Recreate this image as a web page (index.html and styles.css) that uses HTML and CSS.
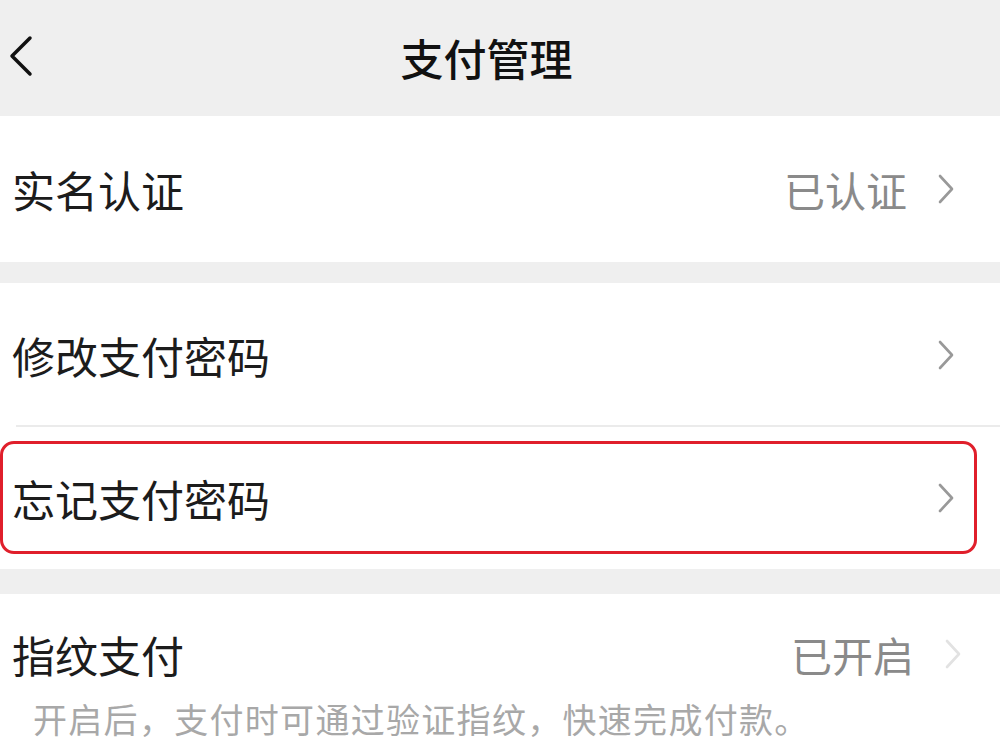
FILE: index.html
```html
<!DOCTYPE html>
<html lang="zh-CN">
<head>
  <meta charset="UTF-8" />
  <title>支付管理</title>
  <link rel="stylesheet" href="styles.css">
</head>
<body>

  <!-- 顶部导航 -->
  <div class="nav">
    <svg class="back" width="26" height="42" viewBox="0 0 26 42">
      <path d="M22 3 L4 21 L22 39" fill="none" stroke="#111" stroke-width="3.5" stroke-linecap="round" stroke-linejoin="round"/>
    </svg>
    <div class="nav-title">支付管理</div>
  </div>

  <div class="group">
    <div class="row">
      <span class="label">实名认证</span>
      <span class="value">已认证</span>
      <svg class="arrow" width="18" height="32" viewBox="0 0 18 32">
        <path d="M3 3 L15 16 L3 29" fill="none" stroke="#999" stroke-width="2.6" stroke-linecap="round" stroke-linejoin="round"/>
      </svg>
    </div>
  </div>

  <div class="group group-mid">
    <div class="row row-line">
      <span class="label">修改支付密码</span>
      <svg class="arrow" width="18" height="32" viewBox="0 0 18 32">
        <path d="M3 3 L15 16 L3 29" fill="none" stroke="#999" stroke-width="2.6" stroke-linecap="round" stroke-linejoin="round"/>
      </svg>
    </div>
    <div class="row row-marked">
      <span class="label">忘记支付密码</span>
      <svg class="arrow" width="18" height="32" viewBox="0 0 18 32">
        <path d="M3 3 L15 16 L3 29" fill="none" stroke="#999" stroke-width="2.6" stroke-linecap="round" stroke-linejoin="round"/>
      </svg>
      <div class="mark"></div>
    </div>
  </div>

  <div class="group group-last">
    <div class="row row-finger">
      <span class="label">指纹支付</span>
      <span class="value">已开启</span>
      <svg class="arrow" width="18" height="32" viewBox="0 0 18 32">
        <path d="M3 3 L15 16 L3 29" fill="none" stroke="#e2e2e2" stroke-width="2.6" stroke-linecap="round" stroke-linejoin="round"/>
      </svg>
    </div>
    <div class="tip">开启后，支付时可通过验证指纹，快速完成付款。</div>
  </div>

</body>
</html>
```

FILE: styles.css
```css
body {
  margin: 0;
  background-color: #efefef;
  font-family: "Noto Sans CJK SC", "Noto Sans", sans-serif;
  color: #1c1c1c;
  overflow: hidden;
}
.nav {
  height: 116px;
  display: flex;
  align-items: center;
  justify-content: center;
  position: relative;
  background-color: #efefef;
}
.back {
  position: absolute;
  left: 8px;
  top: 35px;
}
.nav-title {
  font-size: 43px;
  font-weight: 500;
  color: #111;
  margin-left: -27px;
  margin-top: -2px;
}
.group {
  background-color: #fff;
}
.group-mid {
  margin-top: 21px;
}
.group-last {
  margin-top: 25px;
  padding-bottom: 40px;
}
.row {
  display: flex;
  align-items: center;
  height: 146px;
  padding: 0 45px 0 12px;
  position: relative;
}
.row-line {
  height: 144px;
}
.row-line::after {
  content: "";
  position: absolute;
  left: 16px;
  right: 0;
  bottom: 0;
  height: 2px;
  background-color: #ebebeb;
}
.row-marked {
  height: 142px;
}
.row-finger {
  height: 120px;
  padding-right: 38px;
}
.label {
  font-size: 43px;
  flex: 1;
  line-height: 1;
}
.value {
  font-size: 41px;
  color: #8a8a8a;
  margin-right: 30px;
  line-height: 1;
}
.arrow {
  flex: none;
}
.mark {
  position: absolute;
  left: 0;
  right: 23px;
  top: 14px;
  bottom: 15px;
  border: 3px solid #e01f2b;
  border-radius: 14px;
}
.tip {
  font-size: 34px;
  color: #a8a8a8;
  margin-top: -12px;
  padding-left: 33px;
  line-height: 1;
  letter-spacing: 1.3px;
}
```
